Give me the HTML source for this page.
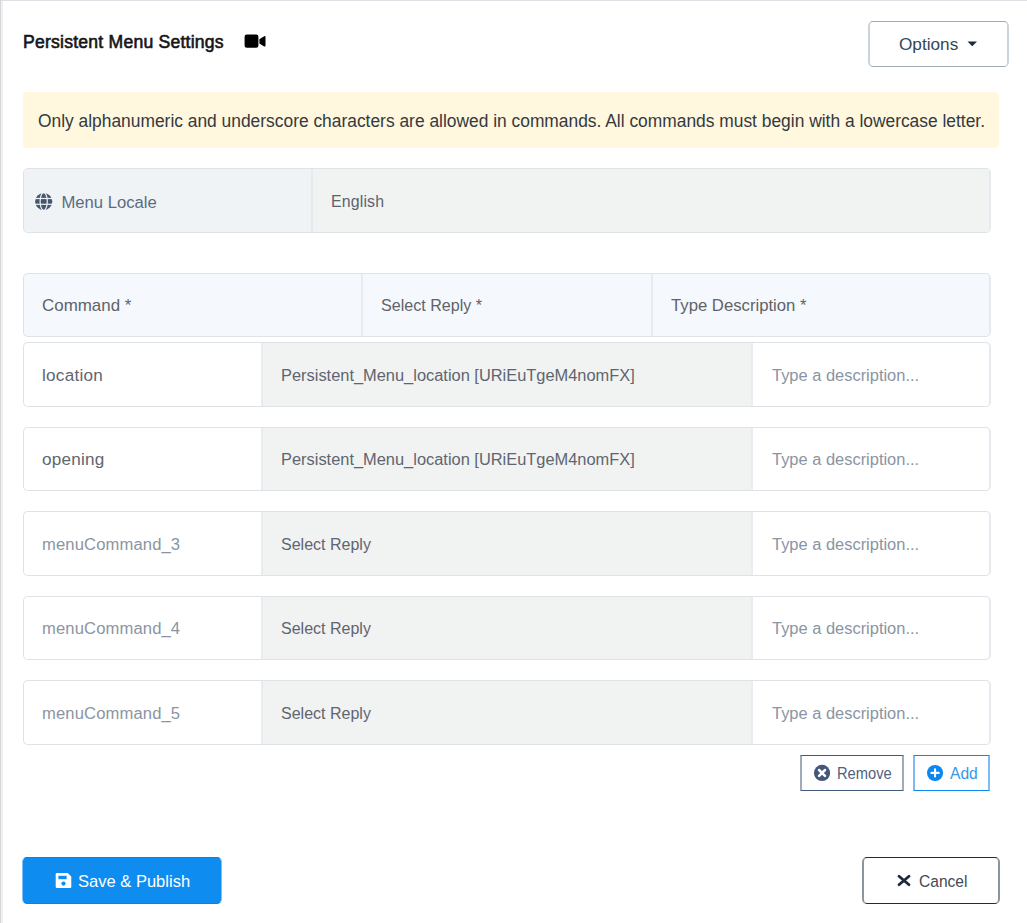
<!DOCTYPE html>
<html><head><meta charset="utf-8">
<style>
*{box-sizing:border-box;margin:0;padding:0}
html,body{width:1027px;height:923px;overflow:hidden;background:#fff}
body{font-family:"Liberation Sans",sans-serif;position:relative}
.a{position:absolute}
.t{position:absolute;white-space:nowrap;line-height:20px;font-size:16.5px}
#lb{left:0;top:0;width:1px;height:923px;background:#d6d6d6}
#lb2{left:1px;top:1px;width:2px;height:922px;background:#eef0f3}
#tb{left:0;top:0;width:1027px;height:1px;background:#dcdfe3}
.grp{position:absolute;left:23px;width:968px;border:1px solid #dfe3e8;border-right:2px solid #e6e9ed;border-radius:5px;overflow:hidden}
.cell{position:absolute;top:0;bottom:0}
</style></head><body>
<div class="a" id="tb"></div>
<div class="a" id="lb"></div>
<div class="a" id="lb2"></div>

<!-- title -->
<div class="t" style="left:23px;top:31.8px;font-size:17.6px;letter-spacing:0.22px;-webkit-text-stroke:0.6px #151518;color:#151518">Persistent Menu Settings</div>
<svg class="a" style="left:244px;top:34px" width="23" height="15" viewBox="0 0 23 15">
  <rect x="0.6" y="0.5" width="13.8" height="13.2" rx="2.2" fill="#000"/>
  <path d="M15.4 5.2 L20.2 2.2 Q21.5 1.6 21.5 3 L21.5 11.6 Q21.5 13 20.2 12.4 L15.4 9.4 Z" fill="#000"/>
</svg>

<!-- options button -->
<div class="a" style="left:868px;top:21px;width:141px;height:46px;border:1px solid #9faab8;border-left:2px solid #cbd3dc;border-right:2px solid #cbd3dc;border-radius:5px"></div>
<div class="t" style="left:899px;top:34px;font-size:17.2px;color:#34465a">Options</div>
<svg class="a" style="left:967px;top:41px" width="11" height="6" viewBox="0 0 11 6"><path d="M0.5 0.5 L10 0.5 L5.25 5.2 Z" fill="#1f2b3a"/></svg>

<!-- alert -->
<div class="a" style="left:23px;top:92px;width:976px;height:56px;background:#fff7de;border-radius:4px"></div>
<div class="t" style="left:38px;top:110.5px;font-size:18.3px;transform:scaleX(0.951);transform-origin:0 0;color:#343a40">Only alphanumeric and underscore characters are allowed in commands. All commands must begin with a lowercase letter.</div>

<!-- menu locale -->
<div class="grp" style="top:168px;height:65px">
  <div class="cell" style="left:0;width:288px;background:#eff3f6"></div>
  <div class="cell" style="left:287px;width:2px;background:#e6e9ee"></div>
  <div class="cell" style="left:289px;right:0;background:#f1f3f2"></div>
</div>
<svg class="a" style="left:32px;top:190px" width="24" height="23" viewBox="0 0 24 23">
  <circle cx="11.7" cy="11.5" r="8.6" fill="#46566f"/>
  <g stroke="#eff3f6" stroke-width="1.2" fill="none">
    <ellipse cx="11.7" cy="11.5" rx="3.6" ry="8.9"/>
    <line x1="2" y1="8.5" x2="22" y2="8.5"/>
    <line x1="2" y1="14.3" x2="22" y2="14.3"/>
  </g>
</svg>
<div class="t" style="left:61.5px;top:193px;font-size:16.65px;color:#5b6c80">Menu Locale</div>
<div class="t" style="left:331px;top:192px;font-size:15.9px;letter-spacing:0.15px;color:#5a6270">English</div>

<!-- header -->
<div class="grp" style="top:273px;height:64px;background:#f5f9fe">
  <div class="cell" style="left:337px;width:2px;background:#e8ebef"></div>
  <div class="cell" style="left:627px;width:2px;background:#e8ebef"></div>
</div>
<div class="t" style="left:42px;top:296px;font-size:16.95px;color:#5f6369">Command *</div>
<div class="t" style="left:381px;top:295px;font-size:16.1px;color:#5f6369">Select Reply *</div>
<div class="t" style="left:671px;top:296px;font-size:16.72px;color:#5f6369">Type Description *</div>

<div class="grp" style="top:342px;height:65px;background:#fff">
  <div class="cell" style="left:237px;width:2px;background:#e8ebef"></div>
  <div class="cell" style="left:239px;width:488px;background:#f1f3f2"></div>
  <div class="cell" style="left:727px;width:2px;background:#e9ecf0"></div>
</div>
<div class="t" style="left:42px;top:365.67px;font-size:17.1px;letter-spacing:0.28px;color:#5f6570">location</div>
<div class="t" style="left:281px;top:365.31px;font-size:16.42px;color:#5f6570">Persistent_Menu_location [URiEuTgeM4nomFX]</div>
<div class="t" style="left:772px;top:365.30px;font-size:16.45px;color:#8a95a3">Type a description...</div>

<div class="grp" style="top:427px;height:64px;background:#fff">
  <div class="cell" style="left:237px;width:2px;background:#e8ebef"></div>
  <div class="cell" style="left:239px;width:488px;background:#f1f3f2"></div>
  <div class="cell" style="left:727px;width:2px;background:#e9ecf0"></div>
</div>
<div class="t" style="left:42px;top:449.06px;font-size:17.15px;letter-spacing:0.22px;color:#5f6570">opening</div>
<div class="t" style="left:281px;top:449.31px;font-size:16.42px;color:#5f6570">Persistent_Menu_location [URiEuTgeM4nomFX]</div>
<div class="t" style="left:772px;top:449.30px;font-size:16.45px;color:#8a95a3">Type a description...</div>

<div class="grp" style="top:511px;height:65px;background:#fff">
  <div class="cell" style="left:237px;width:2px;background:#e8ebef"></div>
  <div class="cell" style="left:239px;width:488px;background:#f1f3f2"></div>
  <div class="cell" style="left:727px;width:2px;background:#e9ecf0"></div>
</div>
<div class="t" style="left:42px;top:534.84px;font-size:16.62px;letter-spacing:0.12px;color:#8a95a3">menuCommand_3</div>
<div class="t" style="left:281px;top:534.45px;font-size:16.03px;color:#5f6570">Select Reply</div>
<div class="t" style="left:772px;top:534.30px;font-size:16.45px;color:#8a95a3">Type a description...</div>

<div class="grp" style="top:596px;height:64px;background:#fff">
  <div class="cell" style="left:237px;width:2px;background:#e8ebef"></div>
  <div class="cell" style="left:239px;width:488px;background:#f1f3f2"></div>
  <div class="cell" style="left:727px;width:2px;background:#e9ecf0"></div>
</div>
<div class="t" style="left:42px;top:618.84px;font-size:16.62px;letter-spacing:0.12px;color:#8a95a3">menuCommand_4</div>
<div class="t" style="left:281px;top:618.45px;font-size:16.03px;color:#5f6570">Select Reply</div>
<div class="t" style="left:772px;top:618.30px;font-size:16.45px;color:#8a95a3">Type a description...</div>

<div class="grp" style="top:680px;height:65px;background:#fff">
  <div class="cell" style="left:237px;width:2px;background:#e8ebef"></div>
  <div class="cell" style="left:239px;width:488px;background:#f1f3f2"></div>
  <div class="cell" style="left:727px;width:2px;background:#e9ecf0"></div>
</div>
<div class="t" style="left:42px;top:703.84px;font-size:16.62px;letter-spacing:0.12px;color:#8a95a3">menuCommand_5</div>
<div class="t" style="left:281px;top:703.45px;font-size:16.03px;color:#5f6570">Select Reply</div>
<div class="t" style="left:772px;top:703.30px;font-size:16.45px;color:#8a95a3">Type a description...</div>

<!-- buttons -->
<div class="a" style="left:800px;top:755px;width:104px;height:36px;border:1px solid #415878;border-left:2px solid #9eabbb;border-right:2px solid #9eabbb;border-radius:1px"></div>
<svg class="a" style="left:810px;top:762px" width="24" height="22" viewBox="0 0 24 22">
  <circle cx="12.05" cy="10.95" r="8.1" fill="#45587a"/>
  <path d="M9.1 8 L15 13.9 M15 8 L9.1 13.9" stroke="#fff" stroke-width="2.5" stroke-linecap="round"/>
</svg>
<div class="t" style="left:837px;top:763.5px;font-size:16px;transform:scaleX(0.917);transform-origin:0 0;color:#4f6280">Remove</div>

<div class="a" style="left:913px;top:755px;width:77px;height:36px;border:1px solid #0b87ef;border-left:2px solid #7bbcf5;border-right:2px solid #7bbcf5;border-radius:1px"></div>
<svg class="a" style="left:923px;top:762px" width="24" height="22" viewBox="0 0 24 22">
  <circle cx="12.05" cy="10.95" r="8.05" fill="#0b87ef"/>
  <path d="M12.05 7.3 L12.05 14.5 M8.4 10.9 L15.7 10.9" stroke="#fff" stroke-width="2.1" stroke-linecap="round"/>
</svg>
<div class="t" style="left:950px;top:763.5px;font-size:16px;transform:scaleX(0.976);transform-origin:0 0;color:#3a96ea">Add</div>

<div class="a" style="left:22px;top:857px;width:200px;height:47px;background:#0e8cf0;border:1px solid #0a82ea;border-left:1px solid #80bff6;border-right:1px solid #80bff6;border-radius:5px"></div>
<svg class="a" style="left:50px;top:868px" width="26" height="24" viewBox="0 0 26 24">
  <path d="M7 4.9 L17.7 4.9 L21.3 8.5 L21.3 18.8 Q21.3 20 20.1 20 L6.9 20 Q5.7 20 5.7 18.8 L5.7 6.1 Q5.7 4.9 7 4.9 Z" fill="#fff"/>
  <rect x="8.4" y="7.8" width="8.2" height="3.4" fill="#0e8cf0"/>
  <circle cx="13.5" cy="15.6" r="2.1" fill="#0e8cf0"/>
</svg>
<div class="t" style="left:78px;top:871.5px;font-size:16.55px;color:#fff">Save &amp; Publish</div>

<div class="a" style="left:862px;top:857px;width:138px;height:47px;border:1px solid #1f2d3d;border-left:2px solid #8c959e;border-right:2px solid #8c959e;border-radius:5px"></div>
<svg class="a" style="left:892px;top:868px" width="24" height="24" viewBox="0 0 24 24">
  <path d="M7 8.2 L17 16.7 M17 8.2 L7 16.7" stroke="#1c2a3a" stroke-width="2.8" stroke-linecap="round"/>
</svg>
<div class="t" style="left:919px;top:871px;font-size:17.4px;transform:scaleX(0.895);transform-origin:0 0;color:#3f4a56">Cancel</div>

</body></html>
